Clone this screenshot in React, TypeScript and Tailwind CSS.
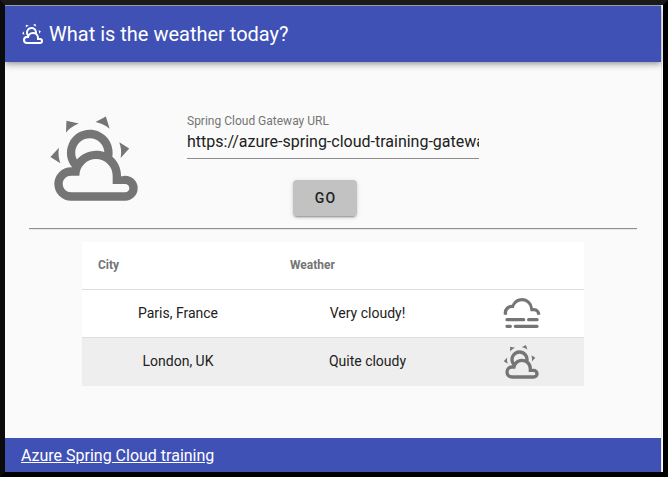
const PARTLY_CLOUDY =
  'M12.74,5.47C15.1,6.5 16.35,9.03 15.92,11.46C17.19,12.56 18,14.19 18,16V16.17C18.31,16.06 18.65,16 19,16A3,3 0 0,1 22,19A3,3 0 0,1 19,22H6A4,4 0 0,1 2,18A4,4 0 0,1 6,14H6.27C5,12.45 4.6,10.24 5.5,8.26C6.72,5.5 9.97,4.24 12.74,5.47M11.93,7.3C10.16,6.5 8.09,7.31 7.31,9.07C6.85,10.09 6.93,11.22 7.41,12.13C8.5,10.83 10.16,10 12,10C12.7,10 13.38,10.12 14,10.34C13.94,9.06 13.18,7.86 11.93,7.3M13.55,3.64C13,3.4 12.45,3.23 11.88,3.12L14.37,1.82L15.27,4.71C14.76,4.29 14.19,3.93 13.55,3.64M6.09,4.44C5.6,4.79 5.17,5.19 4.8,5.63L4.91,2.82L7.87,3.5C7.25,3.71 6.65,4.03 6.09,4.44M18,9.71C17.91,9.12 17.78,8.55 17.59,8L19.97,9.5L17.92,11.73C18.03,11.08 18.05,10.4 18,9.71M3.04,11.3C3.11,11.9 3.24,12.47 3.43,13L1.06,11.5L3.1,9.28C3,9.93 2.97,10.61 3.04,11.3M19,18H16V16A4,4 0 0,0 12,12A4,4 0 0,0 8,16H6A2,2 0 0,0 4,18A2,2 0 0,0 6,20H19A1,1 0 0,0 20,19A1,1 0 0,0 19,18Z';
const FOG =
  'M3,15H13A1,1 0 0,1 14,16A1,1 0 0,1 13,17H3A1,1 0 0,1 2,16A1,1 0 0,1 3,15M16,15H21A1,1 0 0,1 22,16A1,1 0 0,1 21,17H16A1,1 0 0,1 15,16A1,1 0 0,1 16,15M1,12A5,5 0 0,1 6,7C7,4.65 9.3,3 12,3C15.43,3 18.24,5.66 18.5,9.03L19,9C21.19,9 22.97,10.76 23,13H21A2,2 0 0,0 19,11H17V10A5,5 0 0,0 12,5C9.5,5 7.45,6.82 7.06,9.19C6.73,9.07 6.37,9 6,9A3,3 0 0,0 3,12C3,12.35 3.06,12.69 3.17,13H1.1L1,12M3,19H5A1,1 0 0,1 6,20A1,1 0 0,1 5,21H3A1,1 0 0,1 2,20A1,1 0 0,1 3,19M8,19H21A1,1 0 0,1 22,20A1,1 0 0,1 21,21H8A1,1 0 0,1 7,20A1,1 0 0,1 8,19Z';

function Icon({ path, className }: { path: string; className: string }) {
  return (
    <svg viewBox="0 0 24 24" fill="currentColor" aria-hidden="true" className={className}>
      <path d={path} />
    </svg>
  );
}

const rows = [
  { city: 'Paris, France', weather: 'Very cloudy!', icon: FOG },
  { city: 'London, UK', weather: 'Quite cloudy', icon: PARTLY_CLOUDY },
];

export default function App() {
  return (
    <div className="h-[477px] w-[668px] overflow-hidden border-5 border-t-[#1a1a1a] border-r-black border-b-black border-l-[#0b0b0b] bg-white font-[Roboto,sans-serif] text-[#212121]">
      <div className="flex h-full w-[656px] flex-col border-t border-[#a8a8a8] bg-[#fafafa] shadow-[1px_0_0_#e8e8e8]">
        <header className="flex h-14 shrink-0 items-center bg-[#3f51b5] pl-4 text-white shadow-[0_2px_4px_-1px_rgba(0,0,0,0.2),0_4px_5px_0_rgba(0,0,0,0.14),0_1px_10px_0_rgba(0,0,0,0.12)]">
          <Icon path={PARTLY_CLOUDY} className="size-6" />
          <h1 className="ml-1 text-[20px] leading-6">What is the weather today?</h1>
        </header>

        <main className="flex flex-1 flex-col">
          <div className="flex pt-[47px] pl-[41px]">
            <Icon path={PARTLY_CLOUDY} className="size-[100px] text-[#757575]" />
            <div className="ml-[41px] flex w-[292px] flex-col pt-1">
              <label htmlFor="gateway" className="text-[12px] leading-4 text-[#757575]">
                Spring Cloud Gateway URL
              </label>
              <input
                id="gateway"
                readOnly
                defaultValue="https://azure-spring-cloud-training-gateway.azuremicroservices.io"
                className="h-[30px] w-full border-b border-[#8c8c8c] pb-1 text-[16px] outline-none"
              />
              <button className="mt-[21px] ml-[106px] h-9 w-16 rounded bg-[#c2c2c2] pl-px text-[14px] font-medium tracking-[1.25px] shadow-[0_3px_1px_-2px_rgba(0,0,0,0.2),0_2px_2px_0_rgba(0,0,0,0.14),0_1px_5px_0_rgba(0,0,0,0.12)]">
                GO
              </button>
            </div>
          </div>

          <hr className="mt-3 ml-6 w-[608px] border-t border-b border-t-[#8f8f8f] border-b-[#e9e9e9]" />

          <table className="mt-3 ml-[77px] w-[502px] table-fixed border-separate border-spacing-0 bg-white text-[14px]">
            <colgroup>
              <col className="w-[192px]" />
              <col className="w-[187px]" />
              <col className="w-[123px]" />
            </colgroup>
            <thead>
              <tr className="h-12 text-left text-[12px] text-[#757575]">
                <th className="border-b border-[#dedede] px-4 pb-0.5 font-bold">City</th>
                <th className="border-b border-[#dedede] px-4 pb-0.5 font-bold">Weather</th>
                <th className="border-b border-[#dedede]" />
              </tr>
            </thead>
            <tbody>
              {rows.map((r) => (
                <tr key={r.city} className="group h-12 text-center last:bg-[#eeeeee]">
                  <td className="border-b border-[#dedede] p-0 group-last:border-b-0 group-last:pb-0.5">{r.city}</td>
                  <td className="border-b border-[#dedede] p-0 group-last:border-b-0 group-last:pb-0.5">{r.weather}</td>
                  <td className="border-b border-[#dedede] p-0 pr-px pb-px group-last:border-b-0 group-last:pb-0">
                    <Icon path={r.icon} className="mx-auto size-10 text-[#757575]" />
                  </td>
                </tr>
              ))}
            </tbody>
          </table>
        </main>

        <footer className="flex h-[34px] shrink-0 items-center bg-[#3f51b5] pt-px pl-4 text-[16px] text-white">
          <a href="#" className="underline">
            Azure Spring Cloud training
          </a>
        </footer>
      </div>
    </div>
  );
}
